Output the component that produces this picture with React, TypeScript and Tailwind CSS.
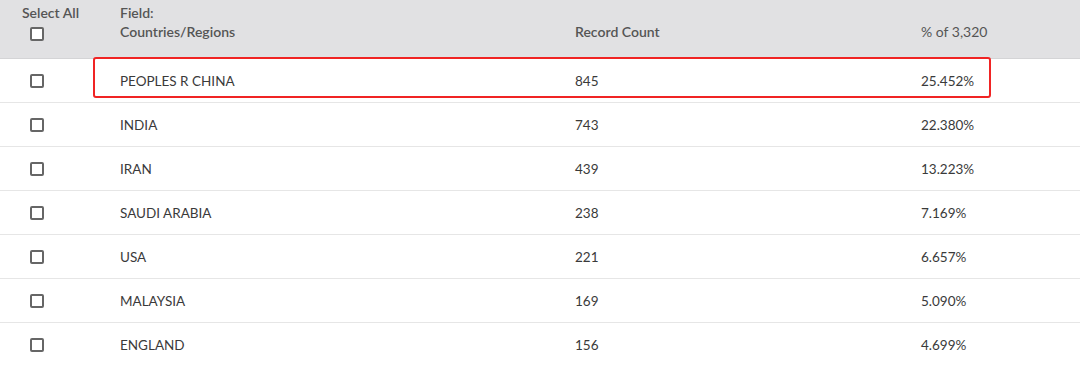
import React from 'react';

type Row = { name: string; count: number; pct: string };

const rows: Row[] = [
  { name: 'PEOPLES R CHINA', count: 845, pct: '25.452%' },
  { name: 'INDIA', count: 743, pct: '22.380%' },
  { name: 'IRAN', count: 439, pct: '13.223%' },
  { name: 'SAUDI ARABIA', count: 238, pct: '7.169%' },
  { name: 'USA', count: 221, pct: '6.657%' },
  { name: 'MALAYSIA', count: 169, pct: '5.090%' },
  { name: 'ENGLAND', count: 156, pct: '4.699%' },
];

function Checkbox() {
  return <span className="block w-[14px] h-[14px] border-2 border-[#666] rounded-[2px] bg-white" />;
}

export default function App() {
  return (
    <div className="w-[1080px] h-[365px] bg-white overflow-hidden font-['Lato','Noto_Sans',sans-serif] text-[13.5px] text-[#3a3a3a]">
      {/* Header */}
      <div className="grid grid-cols-[120px_455px_346px_1fr] h-[59px] bg-[#e1e1e3] border-b border-[#d4d4d6] text-[14px] text-[#555] font-semibold">
        <div className="pl-[22px] pt-[4px]">
          <div className="leading-[18px]">Select All</div>
          <div className="pl-[8px] pt-[5px]"><Checkbox /></div>
        </div>
        <div className="pt-[4px] leading-[18px]">
          <div>Field:</div>
          <div className="pt-[1px]">Countries/Regions</div>
        </div>
        <div className="pt-[23px] leading-[18px]">Record Count</div>
        <div className="pt-[23px] leading-[18px] font-normal">% of 3,320</div>
      </div>

      {/* Rows */}
      {rows.map((r, i) => (
        <div key={r.name} className="relative grid grid-cols-[120px_455px_346px_1fr] items-center h-[44px] border-b border-[#e6e6e6]">
          <div className="pl-[30px]"><Checkbox /></div>
          <div className="pt-[2px]">{r.name}</div>
          <div className="pt-[2px]">{r.count}</div>
          <div className="pt-[2px]">{r.pct}</div>
          {i === 0 && (
            <div className="absolute left-[93px] top-[-2px] w-[898px] h-[41px] border-2 border-[#f02424] rounded-[3px]" />
          )}
        </div>
      ))}
    </div>
  );
}
